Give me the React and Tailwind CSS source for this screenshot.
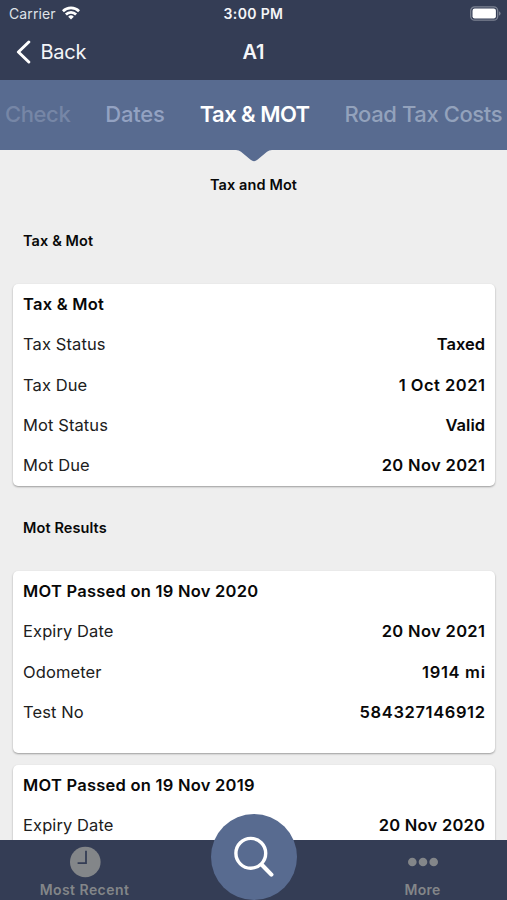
import React from 'react';

const taxRows = [
  { label: 'Tax Status', value: 'Taxed' },
  { label: 'Tax Due', value: '1 Oct 2021', tracking: 'tracking-[0.5px] -mr-[0.5px]' },
  { label: 'Mot Status', value: 'Valid' },
  { label: 'Mot Due', value: '20 Nov 2021', tracking: 'tracking-[0.35px] -mr-[0.35px]' },
];

const motResults = [
  {
    title: 'MOT Passed on 19 Nov 2020',
    rows: [
      { label: 'Expiry Date', value: '20 Nov 2021', tracking: 'tracking-[0.35px] -mr-[0.35px]' },
      { label: 'Odometer', value: '1914 mi', tracking: 'tracking-[0.7px] -mr-[0.7px]' },
      { label: 'Test No', value: '584327146912', tracking: 'tracking-[0.62px] -mr-[0.62px]' },
    ],
  },
  {
    title: 'MOT Passed on 19 Nov 2019',
    rows: [{ label: 'Expiry Date', value: '20 Nov 2020', tracking: 'tracking-[0.25px] -mr-[0.25px]' }],
  },
];

// iOS style status bar
const StatusBar = () => (
  <div className="grid h-[27px] grid-cols-3 items-center pl-[9px] pr-[6px] text-[14px]">
    <div className="flex items-center gap-[6px] text-[#dfe2e8]">
      <span className="tracking-[0.1px]">Carrier</span>
      <svg className="-mt-[2px]" width="18" height="14" viewBox="0 0 18 14" fill="none" stroke="#fff" strokeWidth="2.7">
        <path d="M0.9 5.2a11.5 11.5 0 0 1 16.2 0" />
        <path d="M3.9 8.5a7.2 7.2 0 0 1 10.2 0" />
        <path d="M9 13.6l-2.8-2.9a4 4 0 0 1 5.6 0z" fill="#fff" stroke="none" />
      </svg>
    </div>
    <span className="-ml-[3px] text-center font-semibold tracking-[0.35px] text-[#f4f5f8]">3:00 PM</span>
    <svg className="justify-self-end -mt-px" width="31" height="15" viewBox="0 0 31 15">
      <rect x="0.7" y="0.8" width="27" height="13.4" rx="4" fill="none" stroke="#7c8393" strokeWidth="1.3" />
      <rect x="2.5" y="2.6" width="23.4" height="9.8" rx="2.2" fill="#fff" />
      <path d="M29 5.2v4.6q1.6-.8 1.6-2.3T29 5.2z" fill="#7c8393" />
    </svg>
  </div>
);

const NavBar = () => (
  <div className="grid h-[50px] grid-cols-3 items-center pl-[16px] pr-[16px] text-[20px] text-[#f4f5f8]">
    <div className="flex items-center gap-[9.5px]">
      <svg width="15" height="24" viewBox="0 0 15 24" fill="none" stroke="#fff" strokeWidth="3" strokeLinecap="round" strokeLinejoin="round">
        <path d="M12.8 2L2.4 12l10.4 10" />
      </svg>
      <span className="tracking-[-0.25px]">Back</span>
    </div>
    <span className="text-center font-semibold">A1</span>
  </div>
);

const Tabs = () => (
  <div className="relative z-10 flex h-[70px] shrink-0 items-center gap-[35px] bg-[#586b90] pb-[2px] pl-[5px] text-[22px] font-medium whitespace-nowrap">
    <span className="tracking-[-0.4px] text-[#7686a6]">Check</span>
    <span className="tracking-[-0.2px] text-[#93a2c2]">Dates</span>
    <span className="font-semibold tracking-[-0.55px] text-white">Tax &amp; MOT</span>
    <span className="tracking-[-0.4px] text-[#93a2bc]">Road Tax Costs</span>
    {/* pointer under the active tab */}
    <svg className="absolute top-[69px] left-[236px]" width="36" height="13" viewBox="0 0 36 13" fill="#586b90">
      <path d="M0 0v1q3 0 5 1.8l9.6 8q3.4 2.8 6.8 0l9.6-8Q33 1 36 1V0z" />
    </svg>
  </div>
);

const SectionTitle = ({ children }) => (
  <h2 className="pl-[23px] text-[14.5px] leading-[20px] font-semibold tracking-[0.1px]">{children}</h2>
);

const Card = ({ title, rows, className }) => (
  <div className={`ml-[13px] mr-[12px] rounded-[5px] bg-white px-[10px] text-[16.5px] shadow-[0_1px_2px_rgba(0,0,0,0.35)] ${className || ''}`}>
    <h3 className="flex h-[40.33px] items-center font-semibold tracking-[0.25px]">{title}</h3>
    {rows.map((row) => (
      <div key={row.label} className="flex h-[40.33px] items-center justify-between">
        <span className="tracking-[0.1px] text-[#202020]">{row.label}</span>
        <span className={`font-semibold ${row.tracking || ''}`}>{row.value}</span>
      </div>
    ))}
  </div>
);

const BottomBar = () => (
  <div className="relative z-10 grid h-[60px] shrink-0 grid-cols-3 bg-[#343d55] text-[14px] font-semibold text-[#838689]">
    <div className="flex flex-col items-center pt-[6px]">
      <svg width="32" height="32" viewBox="0 0 32 32">
        <circle cx="16.3" cy="16" r="15.3" fill="#838689" />
        <path d="M17 4.8v12.4H8.6" fill="none" stroke="#343d55" strokeWidth="1.8" />
      </svg>
      <span className="mt-[2px] leading-[20px] tracking-[0.45px]">Most Recent</span>
    </div>
    <div className="flex justify-center">
      <button className="-mt-[26px] flex h-[86px] w-[86px] items-center justify-center rounded-full bg-[#586b90]">
        <svg width="40" height="42" viewBox="0 0 40 42" fill="none" stroke="#fff" strokeLinecap="round">
          <circle cx="16.8" cy="17.3" r="14.9" strokeWidth="3.4" />
          <path d="M27.8 28.8L37.4 38.6" strokeWidth="4.2" />
        </svg>
      </button>
    </div>
    <div className="flex flex-col items-center pt-[6px]">
      <svg width="32" height="32" viewBox="0 0 32 32" fill="#838689">
        <circle cx="5.3" cy="16" r="4.3" />
        <circle cx="16" cy="16" r="4.3" />
        <circle cx="26.7" cy="16" r="4.3" />
      </svg>
      <span className="mt-[2px] leading-[20px] tracking-[0.2px]">More</span>
    </div>
  </div>
);

function App() {
  return (
    <div className="flex h-[900px] w-[507px] flex-col overflow-hidden bg-[#eeeeee] font-['Inter','Liberation_Sans',sans-serif] text-[#080808]">
      <header className="h-[80px] shrink-0 bg-[#343d55]">
        <StatusBar />
        <NavBar />
      </header>
      <Tabs />

      <main className="min-h-0 flex-1 overflow-hidden">
        <h1 className="pt-[25px] text-center text-[14.5px] leading-[20px] font-semibold tracking-[0.1px]">Tax and Mot</h1>
        <div className="pt-[36px]">
          <SectionTitle>Tax &amp; Mot</SectionTitle>
        </div>
        <Card title="Tax &amp; Mot" rows={taxRows} className="mt-[33.3px]" />

        <div className="pt-[32px]">
          <SectionTitle>Mot Results</SectionTitle>
        </div>
        <div className="mt-[33.3px] flex flex-col gap-[12px]">
          {motResults.map((result) => (
            <Card key={result.title} title={result.title} rows={result.rows} className="pb-[20.3px]" />
          ))}
        </div>
      </main>

      <BottomBar />
    </div>
  );
}

export default App;
